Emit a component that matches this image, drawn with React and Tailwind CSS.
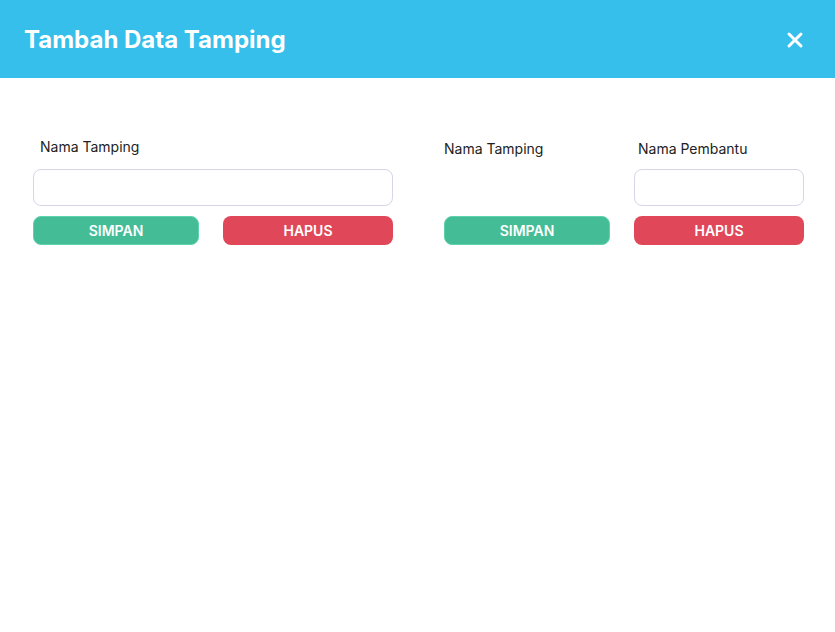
import { X } from 'lucide-react';

function Btn({ color, children }) {
  return (
    <button
      className={`h-[29px] rounded-lg text-sm font-semibold text-white ${color}`}
    >
      {children}
    </button>
  );
}

export default function App() {
  return (
    <div
      className="w-[835px] h-[632px] bg-white text-[#222]"
      style={{ fontFamily: 'Inter, "Noto Sans", sans-serif' }}
    >
      <div className="h-[78px] bg-[#35bfea] flex items-center justify-between pl-[24px] pr-[28px] pt-[2px]">
        <h1 className="text-[24px] font-bold text-white">Tambah Data Tamping</h1>
        <X className="w-[24px] h-[24px] text-white" strokeWidth={3} />
      </div>

      <div className="grid grid-cols-[360px_360px] gap-x-[51px] px-[33px] pt-[59px]">
        {/* kiri */}
        <div className="flex flex-col">
          <label className="h-[32px] pl-[7px] text-sm">Nama Tamping</label>
          <input className="h-[37px] rounded-lg border border-[#d6d6e8] outline-none px-3 text-sm" />
          <div className="grid grid-cols-[166px_170px] gap-x-[24px] mt-[10px]">
            <Btn color="bg-[#44bd97] border border-[#5dd2ad]">SIMPAN</Btn>
            <Btn color="bg-[#e0485a]">HAPUS</Btn>
          </div>
        </div>

        {/* kanan */}
        <div className="grid grid-cols-[166px_170px] gap-x-[24px]">
          <label className="h-[32px] pt-[2px] text-sm">Nama Tamping</label>
          <label className="h-[32px] pt-[2px] pl-[4px] text-sm">Nama Pembantu</label>
          <div />
          <input className="h-[37px] rounded-lg border border-[#d6d6e8] outline-none px-3 text-sm" />
          <div className="col-span-2 grid grid-cols-[166px_170px] gap-x-[24px] mt-[10px]">
            <Btn color="bg-[#44bd97] border border-[#5dd2ad]">SIMPAN</Btn>
            <Btn color="bg-[#e0485a]">HAPUS</Btn>
          </div>
        </div>
      </div>
    </div>
  );
}
